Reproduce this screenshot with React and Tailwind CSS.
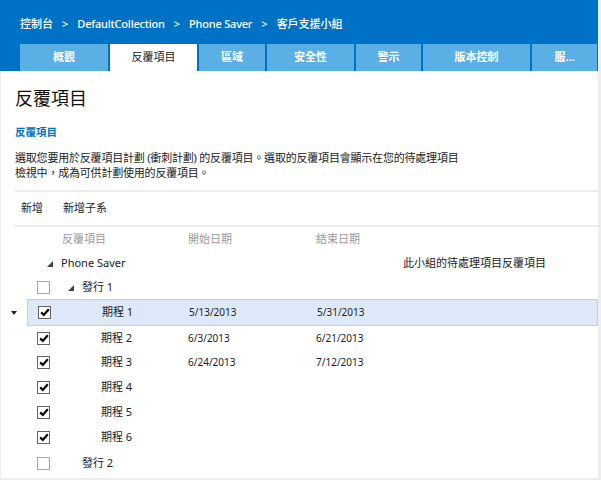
import React from "react";

const font = { fontFamily: '"Noto Sans", "Noto Sans CJK TC", sans-serif' };

const tabs = [
  { label: "概觀", w: "w-[88px]" },
  { label: "反覆項目", w: "w-[87px]", active: true },
  { label: "區域", w: "w-[66px]" },
  { label: "安全性", w: "w-[87px]" },
  { label: "警示", w: "w-[65px]" },
  { label: "版本控制", w: "w-[107px]" },
  { label: "服...", w: "w-[65px]" },
];

const Expander = () => (
  <svg width="6" height="6" viewBox="0 0 6 6" className="shrink-0">
    <polygon points="6,0 6,6 0,6" fill="#444" />
  </svg>
);

const CheckBox = ({ checked }) => (
  <div
    className={`w-[13px] h-[13px] shrink-0 bg-white border ${
      checked ? "border-[#666]" : "border-[#a6a6b4]"
    } flex items-center justify-center`}
  >
    {checked && (
      <svg width="10" height="9" viewBox="0 0 10 9">
        <path d="M1.2 4.4 L3.8 7 L8.8 1.2" fill="none" stroke="#000" strokeWidth="2.2" />
      </svg>
    )}
  </div>
);

const Row = ({ h, selected, marker, children, start, end, extra }) => (
  <div className={`flex ${h}`}>
    <div className="w-[26px] shrink-0 flex items-center pl-[10px]">
      {marker && (
        <svg width="6" height="4" viewBox="0 0 6 4">
          <polygon points="0,0 6,0 3,4" fill="#222" />
        </svg>
      )}
    </div>
    <div
      className={`flex-1 flex items-center pl-[10px] ${
        selected ? "bg-[#dde9f8] border border-[#b4d2f3] pl-[9px]" : ""
      }`}
    >
      <div className="w-[151px] shrink-0 flex items-center">{children}</div>
      <div className="w-[128px] shrink-0 text-[10px]">{start}</div>
      <div className="w-[87px] shrink-0 text-[10px]">{end}</div>
      <div>{extra}</div>
    </div>
  </div>
);

const Iteration = ({ name }) => (
  <>
    <CheckBox checked />
    <span className="ml-[51px]">{name}</span>
  </>
);

const App = () => {
  return (
    <div className="w-[601px] h-[480px] bg-[#ededed] pr-[3px] pb-[2px] text-[11px] text-[#222] overflow-hidden" style={font}>
      <div className="bg-[#0072c6] h-[71px] flex flex-col">
        <div className="h-[44px] flex items-center pl-[20px] pt-[5px] text-white font-medium text-[11px]">
          <span>控制台</span>
          <span className="mx-[9px]">&gt;</span>
          <span className="tracking-[-0.2px]">DefaultCollection</span>
          <span className="mx-[9px]">&gt;</span>
          <span className="tracking-[-0.2px]">Phone Saver</span>
          <span className="mx-[9px]">&gt;</span>
          <span>客戶支援小組</span>
        </div>
        <div className="flex h-[27px] pl-[20px] gap-[2px]">
          {tabs.map((t) => (
            <div
              key={t.label}
              className={`${t.w} flex items-center justify-center ${
                t.active ? "bg-white text-[#222]" : "bg-[#5aafe4] text-white font-semibold"
              }`}
            >
              {t.label}
            </div>
          ))}
        </div>
      </div>
      <div className="bg-white h-[407px] ml-[1px] flex flex-col">
        <div className="pl-[14px] pt-[15px] text-[18px] leading-[24px] text-[#111]">反覆項目</div>
        <div className="pl-[14px] mt-[15px] text-[10.5px] leading-[14px] font-semibold text-[#0072c6]">反覆項目</div>
        <div className="pl-[14px] mt-[11px] leading-[15px] text-[#222] tracking-[-0.2px]">
          選取您要用於反覆項目計劃 (衝刺計劃) 的反覆項目。選取的反覆項目會顯示在您的待處理項目
          <br />
          檢視中，成為可供計劃使用的反覆項目。
        </div>
        <div className="ml-[14px] mt-[10px] h-[2px] bg-[#ececec]" />
        <div className="h-[33px] flex items-center pl-[20px] pb-[1px] text-[#222]">
          <span>新增</span>
          <span className="ml-[20px]">新增子系</span>
        </div>
        <div className="ml-[14px] h-[2px] bg-[#ececec]" />
        <Row
          h="h-[24px]"
          start={<span className="text-[#9a9a9a] text-[11px]">開始日期</span>}
          end={<span className="text-[#9a9a9a] text-[11px]">結束日期</span>}
        >
          <span className="ml-[25px] text-[#9a9a9a]">反覆項目</span>
        </Row>
        <Row h="h-[25px]" extra={<span>此小組的待處理項目反覆項目</span>}>
          <span className="ml-[10px] flex items-center">
            <Expander />
            <span className="ml-[8px]">Phone Saver</span>
          </span>
        </Row>
        <Row h="h-[23px]">
          <CheckBox />
          <span className="ml-[18px] flex items-center">
            <Expander />
            <span className="ml-[8px]">發行 1</span>
          </span>
        </Row>
        <Row h="h-[27px]" selected marker start="5/13/2013" end="5/31/2013">
          <Iteration name="期程 1" />
        </Row>
        <Row h="h-[24px]" start="6/3/2013" end="6/21/2013">
          <Iteration name="期程 2" />
        </Row>
        <Row h="h-[25px]" start="6/24/2013" end="7/12/2013">
          <Iteration name="期程 3" />
        </Row>
        <Row h="h-[25px]">
          <Iteration name="期程 4" />
        </Row>
        <Row h="h-[25px]">
          <Iteration name="期程 5" />
        </Row>
        <Row h="h-[25px]">
          <Iteration name="期程 6" />
        </Row>
        <Row h="h-[26px]">
          <CheckBox />
          <span className="ml-[32px]">發行 2</span>
        </Row>
      </div>
    </div>
  );
};

export default App;
